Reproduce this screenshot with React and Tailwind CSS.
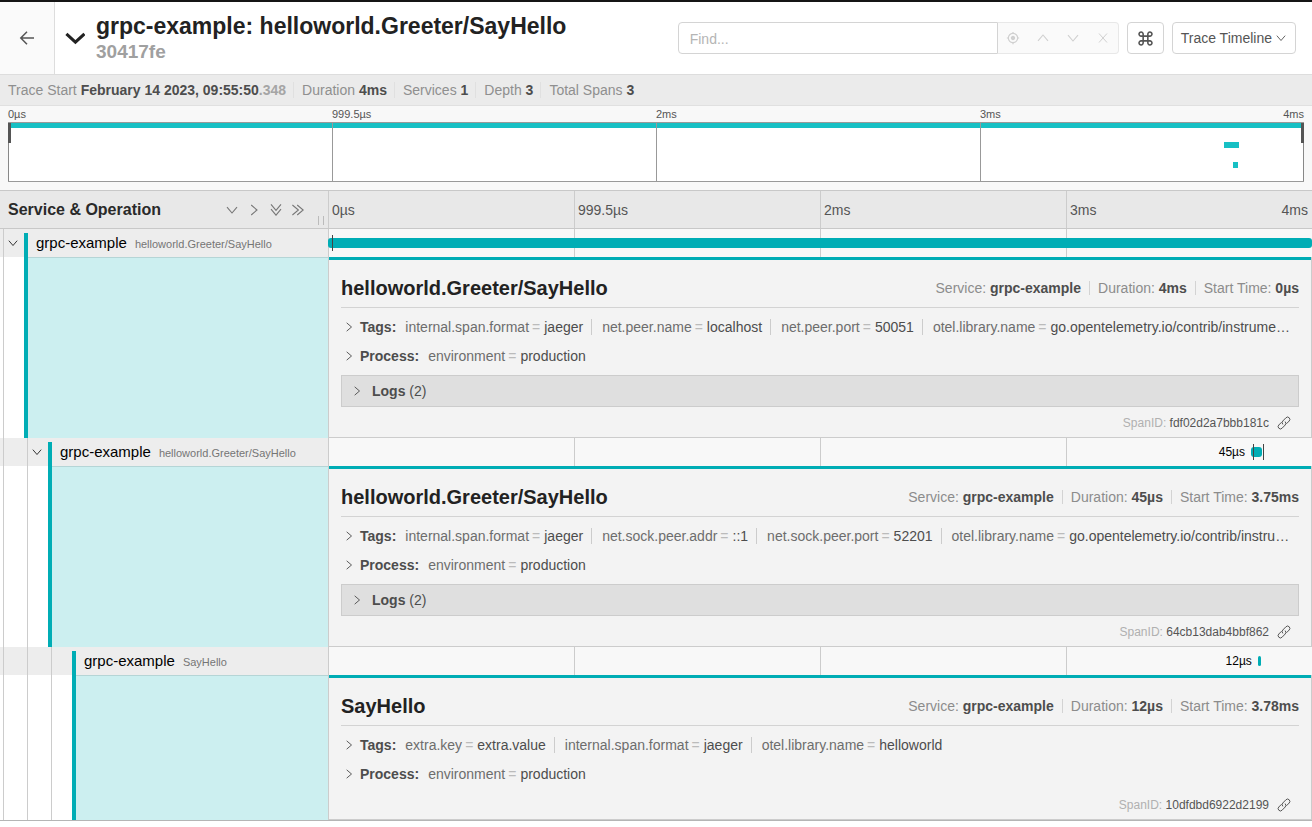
import React from "react";
import { IoMdLocate } from "react-icons/io";

const TICKS = ["0µs", "999.5µs", "2ms", "3ms"];

const SPANS = [
  {
    id: "fdf02d2a7bbb181c",
    depth: 0,
    hasChildren: true,
    service: "grpc-example",
    operation: "helloworld.Greeter/SayHello",
    duration: "4ms",
    start: "0µs",
    bar: { left: "0%", width: "100%" },
    marks: ["0.4%"],
    tags: [
      ["internal.span.format", "jaeger"],
      ["net.peer.name", "localhost"],
      ["net.peer.port", "50051"],
      ["otel.library.name", "go.opentelemetry.io/contrib/instrume…"],
    ],
    logs: 2,
  },
  {
    id: "64cb13dab4bbf862",
    depth: 1,
    hasChildren: true,
    service: "grpc-example",
    operation: "helloworld.Greeter/SayHello",
    duration: "45µs",
    start: "3.75ms",
    label: "45µs",
    bar: { left: "93.8%", width: "1.12%" },
    marks: ["94%", "95%"],
    tags: [
      ["internal.span.format", "jaeger"],
      ["net.sock.peer.addr", "::1"],
      ["net.sock.peer.port", "52201"],
      ["otel.library.name", "go.opentelemetry.io/contrib/instru…"],
    ],
    logs: 2,
  },
  {
    id: "10dfdbd6922d2199",
    depth: 2,
    hasChildren: false,
    service: "grpc-example",
    operation: "SayHello",
    duration: "12µs",
    start: "3.78ms",
    label: "12µs",
    bar: { left: "94.5%", width: "0.3%" },
    marks: [],
    tags: [
      ["extra.key", "extra.value"],
      ["internal.span.format", "jaeger"],
      ["otel.library.name", "helloworld"],
    ],
    logs: 0,
  },
];

function Chevron({ className = "" }) {
  return (
    <svg viewBox="0 0 12 12" fill="none" stroke="currentColor" className={className} aria-hidden="true">
      <path d="M1 3.2 6 9 11 3.2" strokeWidth="1.1" />
    </svg>
  );
}

function DoubleChevron({ className = "" }) {
  return (
    <svg viewBox="0 0 12 12" fill="none" stroke="currentColor" className={className} aria-hidden="true">
      <path d="M1 .4 6 6.4 11 .4M1 5.2 6 11.2l5-6" strokeWidth="1.1" />
    </svg>
  );
}

function LinkIcon() {
  return (
    <svg viewBox="0 0 14 14" className="h-3.5 w-3.5" fill="none" stroke="currentColor" strokeWidth="1" strokeLinecap="round" aria-hidden="true">
      <path d="M5.6 8.1a2.3 2.3 0 0 1 .2-3.1L8.9 1.8a2.3 2.3 0 0 1 3.3 0 2.3 2.3 0 0 1 0 3.2L9.7 7.5" />
      <path d="M8.4 5.9a2.3 2.3 0 0 1-.2 3.1l-3.1 3.2a2.3 2.3 0 0 1-3.3 0 2.3 2.3 0 0 1 0-3.2l2.5-2.5" />
    </svg>
  );
}

function Header() {
  return (
    <header className="flex h-[73px] items-center border-b border-[#ddd] bg-white">
      <a href="#search" aria-label="Back" className="flex w-[55px] items-center justify-center self-stretch border-r border-[#ddd] bg-[#fafafa] text-[#555]">
        <svg viewBox="0 0 16 16" className="h-4 w-4" fill="none" stroke="currentColor" strokeWidth="1.5" aria-hidden="true">
          <path d="M15 8H1.8M8 1.8 1.8 8 8 14.2" />
        </svg>
      </a>
      <button type="button" aria-label="Toggle trace details" className="ml-[10px] text-[#222]">
        <svg viewBox="0 0 20 20" className="h-5 w-5" fill="none" stroke="currentColor" strokeWidth="3" aria-hidden="true">
          <path d="M1.4 5.9 10.4 14.2 19.4 5.9" />
        </svg>
      </button>
      <h1 className="ml-[11px] flex-1 truncate font-bold">
        <span className="block truncate text-[23px] leading-7 text-[#222]">grpc-example: helloworld.Greeter/SayHello</span>
        <span className="block text-[19px] leading-6 text-[#a0a0a0]">30417fe</span>
      </h1>
      <div className="mr-4 flex items-center gap-2">
        <div className="flex h-8">
          <input
            type="text"
            aria-label="Find"
            placeholder="Find..."
            className="w-80 rounded-l border border-[#d4d4d4] bg-white px-[11px] pt-0.5 text-sm outline-none placeholder:text-[#b5b5b5]"
          />
          <div className="flex items-center rounded-r border border-l-0 border-[#e8e8e8] bg-[#fafafa] text-[#d0d0d0]">
            <button type="button" disabled aria-label="Locate" className="flex w-[30px] justify-center"><IoMdLocate className="h-3.5 w-3.5" /></button>
            <button type="button" disabled aria-label="Previous" className="flex w-[30px] justify-center"><Chevron className="h-3 w-3 rotate-180" /></button>
            <button type="button" disabled aria-label="Next" className="flex w-[30px] justify-center"><Chevron className="h-3 w-3" /></button>
            <button type="button" disabled aria-label="Clear" className="flex w-[30px] justify-center">
              <svg viewBox="0 0 10 10" className="h-2.5 w-2.5" stroke="currentColor" aria-hidden="true"><path d="M1 .5 9 9.5M9 .5 1 9.5" /></svg>
            </button>
          </div>
        </div>
        <button type="button" aria-label="Keyboard shortcuts" className="flex h-8 w-[37px] items-center justify-center rounded border border-[#d4d4d4] bg-white text-[#555]">
          <svg viewBox="0 0 16 16" className="h-[15px] w-[15px]" fill="none" stroke="currentColor" strokeWidth="1.7" aria-hidden="true">
            <path d="M5.5 5.5h5v5h-5zM5.5 5.5V3.4a2.2 2.2 0 1 0-2.2 2.1zM10.5 5.5V3.4a2.2 2.2 0 1 1 2.2 2.1zM5.5 10.5v2.1a2.2 2.2 0 1 1-2.2-2.1zM10.5 10.5v2.1a2.2 2.2 0 1 0 2.2-2.1z" />
          </svg>
        </button>
        <button type="button" aria-haspopup="menu" className="flex h-8 items-center justify-center gap-1 rounded border border-[#d4d4d4] bg-white pl-2 pr-[9px] text-sm text-[#555]">
          <span>Trace Timeline</span>
          <Chevron className="h-2.5 w-2.5" />
        </button>
      </div>
    </header>
  );
}

function Summary() {
  const items = [
    ["Duration", "4ms"],
    ["Services", "1"],
    ["Depth", "3"],
    ["Total Spans", "3"],
  ];
  return (
    <ul className="flex h-[31px] items-center border-b border-[#e0e0e0] bg-[#ebebeb] px-2 text-sm leading-4 text-[#8f8f8f]">
      <li className="border-r border-[#e0e0e0] pr-[7px]">
        Trace Start <strong className="text-[#4d4d4d]">February 14 2023, 09:55:50</strong>
        <strong className="text-[#a5a5a5]">.348</strong>
      </li>
      {items.map(([k, v]) => (
        <li key={k} className="border-r border-[#e0e0e0] pl-2 pr-[7px] last:border-r-0">
          {k} <strong className="text-[#4d4d4d]">{v}</strong>
        </li>
      ))}
    </ul>
  );
}

function Minimap() {
  return (
    <section aria-label="Trace overview" className="h-[84px] bg-[#f8f8f8] px-2">
      <div className="grid h-4 grid-cols-4 text-[11px] leading-4 text-[#555]">
        {TICKS.map((t, i) => (
          <div key={t} className="flex justify-between">
            <span>{t}</span>
            {i === 3 && <span>4ms</span>}
          </div>
        ))}
      </div>
      <svg className="block h-[60px] w-full" shapeRendering="crispEdges" aria-hidden="true">
        <rect width="100%" height="60" fill="#999" />
        <svg x="0" y="1" width="100%" height="58">
          <rect width="100%" height="58" fill="#fff" />
          <rect width="100%" height="5" fill="#17c0c4" />
          <rect x="93.85%" y="19" width="15" height="6" fill="#17c0c4" />
          <rect x="94.55%" y="39" width="5" height="6" fill="#17c0c4" />
          <rect x="25%" width="1" height="58" fill="#999" />
          <rect x="50%" width="1" height="58" fill="#999" />
          <rect x="75%" width="1" height="58" fill="#999" />
          <rect width="1" height="58" fill="#888" />
          <rect width="3" height="20" fill="#555" />
          <svg x="100%" width="3" height="58" overflow="visible">
            <rect x="-1" width="1" height="58" fill="#888" />
            <rect x="-3" width="3" height="20" fill="#555" />
          </svg>
        </svg>
      </svg>
    </section>
  );
}

function TimelineHeader() {
  return (
    <div className="grid h-[39px] grid-cols-[25%_75%] border-y border-[#c8c8c8] bg-[#e8e8e8]">
      <div className="flex items-center pl-2 pr-1">
        <h2 className="flex-1 truncate text-base font-bold text-[#2a2a2a]">Service &amp; Operation</h2>
        <div className="flex text-[#777]">
          <button type="button" aria-label="Expand one level" className="flex w-[22px] justify-center"><Chevron className="h-3 w-3" /></button>
          <button type="button" aria-label="Collapse one level" className="flex w-[22px] justify-center"><Chevron className="h-3 w-3 -rotate-90" /></button>
          <button type="button" aria-label="Expand all" className="flex w-[22px] justify-center"><DoubleChevron className="h-3 w-3" /></button>
          <button type="button" aria-label="Collapse all" className="flex w-[22px] justify-center"><DoubleChevron className="h-3 w-3 -rotate-90" /></button>
        </div>
        <div className="mb-[3px] ml-[9px] h-[9px] w-[6px] self-end border-x border-[#bbb]" />
      </div>
      <div className="grid grid-cols-4 text-sm text-[#555]">
        {TICKS.map((t, i) => (
          <div key={t} className="flex items-center justify-between border-l border-[#ccc] pl-[3px] pr-1">
            <span>{t}</span>
            {i === 3 && <span>4ms</span>}
          </div>
        ))}
      </div>
    </div>
  );
}

function Indents({ depth, toggle }) {
  return Array.from({ length: depth + 1 }, (_, i) => (
    <div key={i} className="flex w-6 shrink-0 self-stretch pl-[3px]">
      <div className="flex flex-1 items-center justify-center border-l border-[#ccc] pr-0.5">
        {toggle && i === depth && (
          <button type="button" aria-label="Toggle children" className="text-[#222]">
            <Chevron className="h-2.5 w-2.5" />
          </button>
        )}
      </div>
    </div>
  ));
}

function SpanBarRow({ span }) {
  return (
    <div className="grid h-7 grid-cols-[25%_75%]">
      <div className="flex items-center bg-[#ededed]">
        <Indents depth={span.depth} toggle={span.hasChildren} />
        <a href={"#" + span.id} className="mt-1 flex flex-1 items-baseline self-stretch truncate border-l-4 border-[#00adb5] pl-2 leading-5">
          <span className="text-[15px] text-black">{span.service}</span>
          <small className="ml-2 text-[11px] text-[#757575]">{span.operation}</small>
        </a>
      </div>
      <div className="relative grid grid-cols-4 bg-[#f8f8f8]">
        {TICKS.map((t) => (
          <div key={t} className="border-l border-[#ccc]" />
        ))}
        <div className="absolute inset-y-0 flex items-center" style={span.bar}>
          {span.label && <span className="absolute right-full mr-1.5 text-xs text-black">{span.label}</span>}
          <div className="h-2.5 w-full rounded-[3px] bg-[#00adb5]" />
        </div>
        {span.marks.map((m) => (
          <div key={m} className="absolute inset-y-1.5 w-px bg-[#444]" style={{ left: m }} />
        ))}
      </div>
    </div>
  );
}

function KeyValues({ label, items }) {
  return (
    <div className="flex h-[29px] items-center text-sm text-[#4d4d4d]">
      <button type="button" className="ml-[3px] flex shrink-0 items-center gap-1.5 font-bold">
        <Chevron className="h-2.5 w-2.5 -rotate-90" />
        {label}:
      </button>
      <ul className="ml-[9px] flex-1 truncate">
        {items.map(([k, v]) => (
          <li key={k} className="mr-2.5 inline border-r border-[#ccc] pr-2 last:mr-0 last:border-r-0 last:pr-0">
            <span className="text-[#6d6d6d]">{k}</span>
            <span className="ml-[3px] mr-1 text-[#bbb]">=</span>
            <span>{v}</span>
          </li>
        ))}
      </ul>
    </div>
  );
}

function SpanDetailRow({ span }) {
  const facts = [
    ["Service:", span.service],
    ["Duration:", span.duration],
    ["Start Time:", span.start],
  ];
  return (
    <div className="grid grid-cols-[25%_75%]">
      <div className="flex bg-white">
        <Indents depth={span.depth} />
        <div className="w-1 bg-[#00adb5]" />
        <div className="flex-1 border-t border-[#b5d5d6] bg-[#cceff0]" />
      </div>
      <div className="flex min-w-0 flex-col border border-t-0 border-[#ccc] bg-[#f3f3f3]">
        <div className="h-[3px] bg-[#00adb5]" />
        <div className="px-3">
          <div className="flex h-12 items-center border-b border-[#d3d3d3] pt-2">
            <h2 className="flex-1 truncate text-xl leading-7 font-bold text-[#222]">{span.operation}</h2>
            <ul className="flex text-sm leading-[14px] text-[#8c8c8c]">
              {facts.map(([k, v]) => (
                <li key={k} className="border-r border-[#d3d3d3] px-2 last:border-r-0 last:pr-0">
                  {k} <strong className="text-[#4d4d4d]">{v}</strong>
                </li>
              ))}
            </ul>
          </div>
          <div className="pt-1 pb-px">
            <KeyValues label="Tags" items={span.tags} />
            <KeyValues label="Process" items={[["environment", "production"]]} />
          </div>
          {span.logs > 0 && (
            <button type="button" className="mt-1 flex h-8 w-full items-center gap-2.5 border border-[#ccc] bg-[#dfdfdf] px-2.5 text-sm text-[#4d4d4d]">
              <Chevron className="h-2.5 w-2.5 -rotate-90" />
              <span><strong>Logs</strong> ({span.logs})</span>
            </button>
          )}
          <div className="flex h-[30px] items-center justify-end pr-2 pt-px text-xs text-[#555]">
            <span><span className="text-[#b0b0b0]">SpanID:</span> {span.id}</span>
            <a href={"#" + span.id} aria-label="Link to span" className="ml-2"><LinkIcon /></a>
          </div>
        </div>
      </div>
    </div>
  );
}

export default function App() {
  return (
    <main className="min-h-screen border-t-2 border-[#151515] bg-white font-['Liberation_Sans',Arial,sans-serif]">
      <Header />
      <Summary />
      <Minimap />
      <TimelineHeader />
      <div className="border-b border-[#b5b5b5]">
        {SPANS.map((span) => (
          <section key={span.id} aria-label={span.operation}>
            <SpanBarRow span={span} />
            <SpanDetailRow span={span} />
          </section>
        ))}
      </div>
    </main>
  );
}
